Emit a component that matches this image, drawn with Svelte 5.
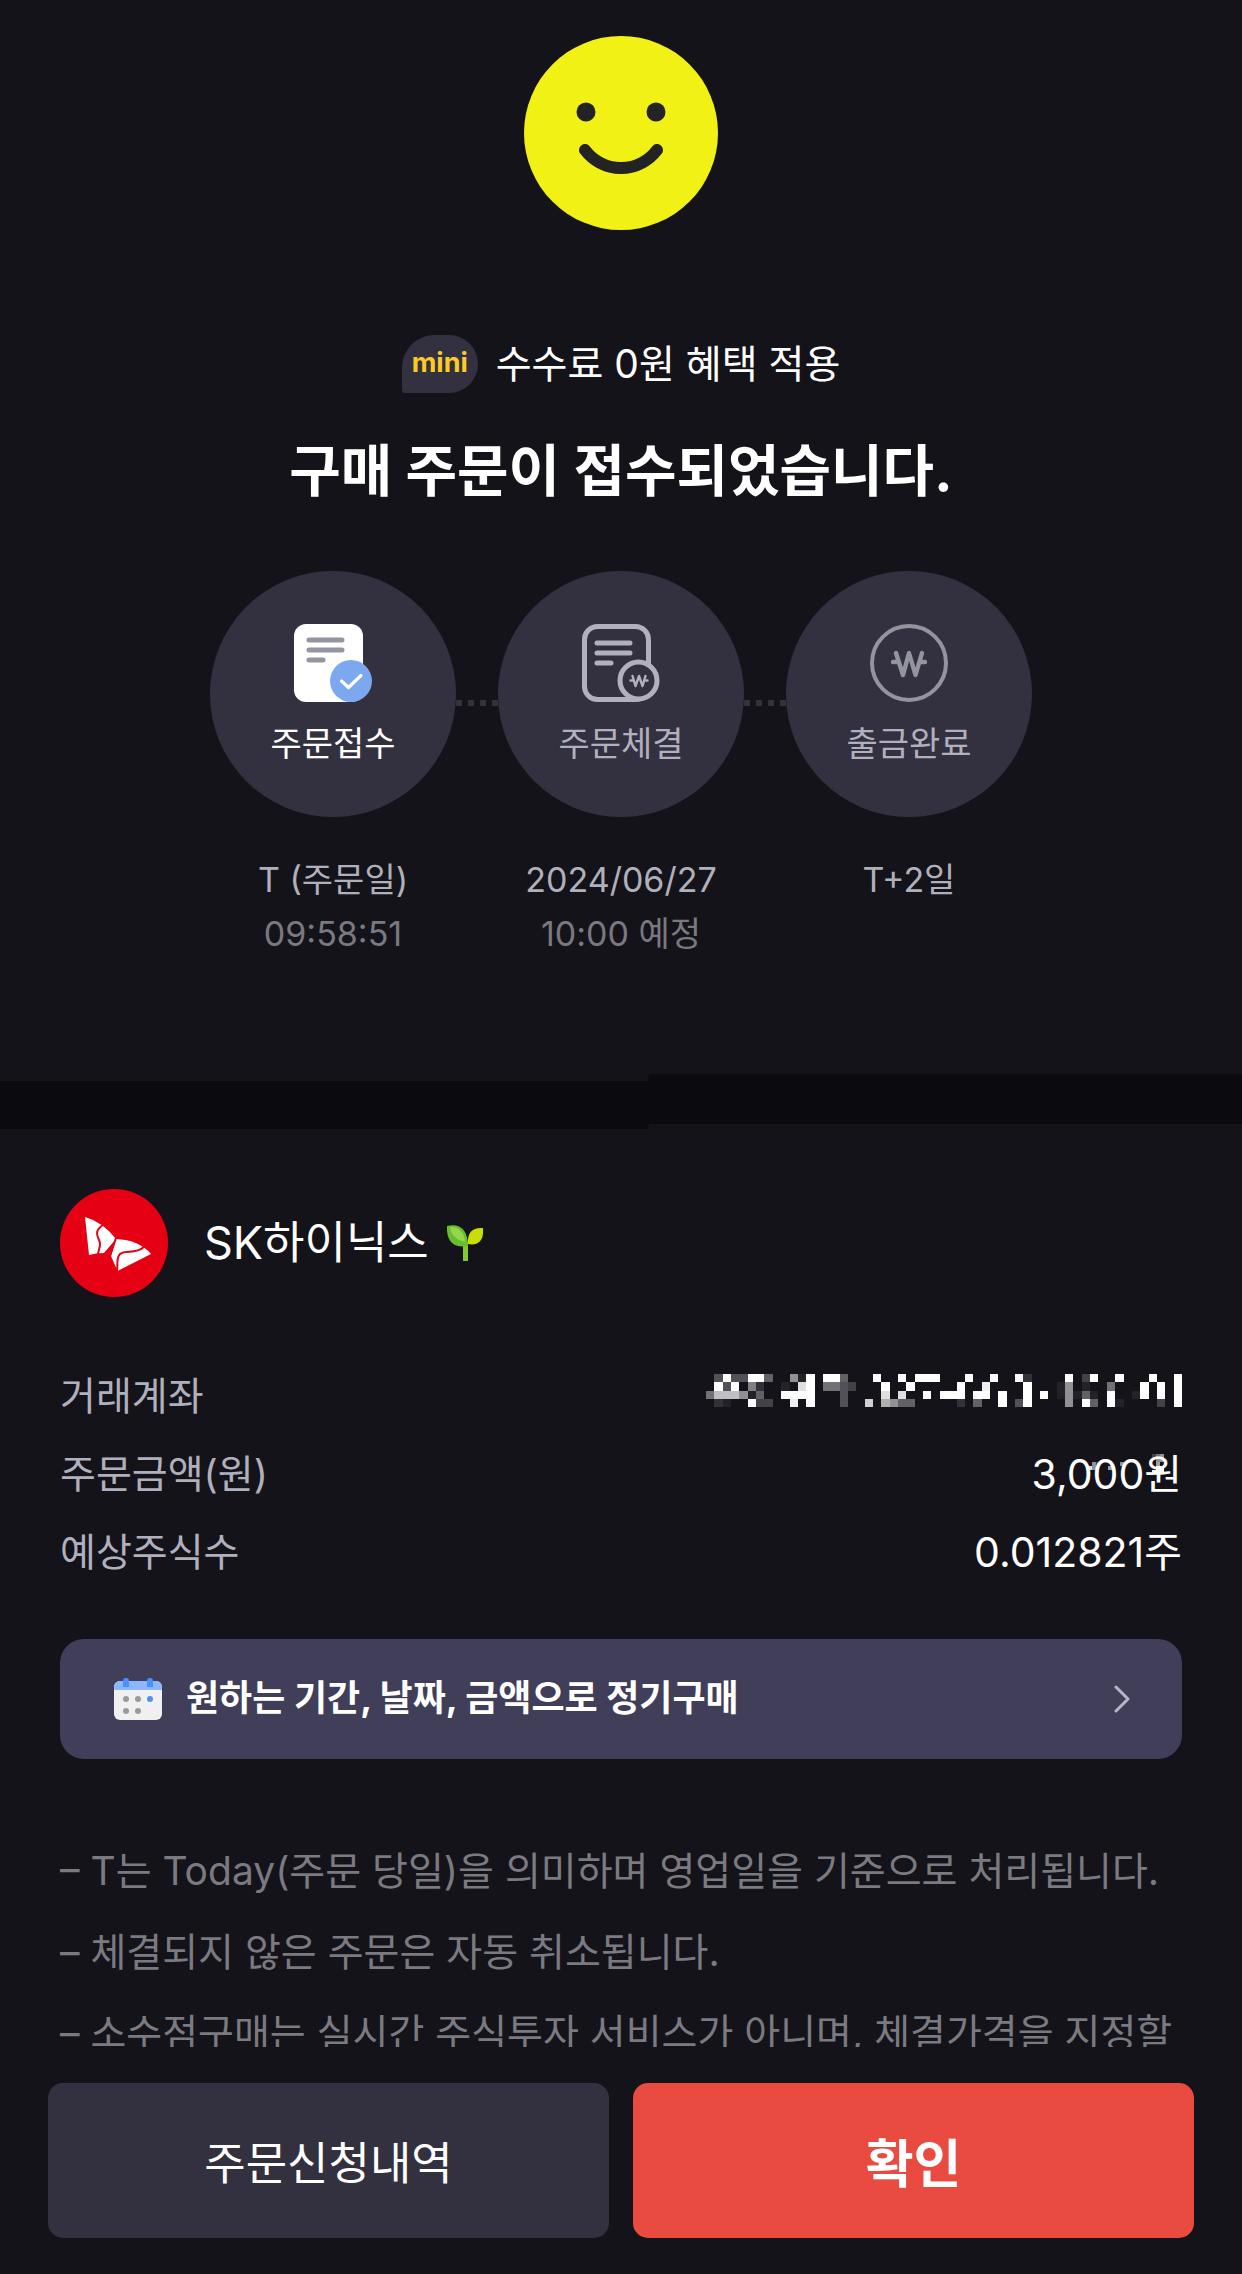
<script lang="ts">
  const steps = [
    { icon: 'received', label: '주문접수', day: 'T (주문일)', time: '09:58:51', active: true },
    { icon: 'filled', label: '주문체결', day: '2024/06/27', time: '10:00 예정', active: false },
    { icon: 'paid', label: '출금완료', day: 'T+2일', time: '', active: false },
  ];

  const notes = [
    'T는 Today(주문 당일)을 의미하며 영업일을 기준으로 처리됩니다.',
    '체결되지 않은 주문은 자동 취소됩니다.',
    '소수점구매는 실시간 주식투자 서비스가 아니며, 체결가격을 지정할',
  ];

  // Masked areas: one hex digit per cell, 0 is empty and f is white
  const accountMask = [
    '04f44ff50081f0ff5000f00f0fff000f00f00f20000f03f00f000f00f',
    '0f4f0720010df06643000f00f00000f00e0000f0001801006000f0f0f',
    '6bbb81500ffff00040000d0d00f0fff0ff0f00f0f0181510f001f0f0f',
    '02100f3300e0f000400c0a8550000020500f04f000080f50f1000030f',
  ];

  const amountMask = [
    '0000000000000000368000',
    '0000000000000000088000',
    '0830000080000000090000',
    'd8000900000000000ff000',
    '0000000000000000fff000',
  ];

  function cells(rows: string[]) {
    return rows.flatMap((row, y) =>
      [...row].flatMap((c, x) => {
        const level = parseInt(c, 16);
        return level ? [{ x, y, opacity: level / 15 }] : [];
      })
    );
  }
</script>

<div class="screen">
  <main>
    <section class="result">
      <svg class="smile" viewBox="0 0 194 194" aria-hidden="true">
        <circle cx="97" cy="97" r="97" fill="#f1f116" />
        <circle cx="62" cy="76" r="9.5" fill="#222322" />
        <circle cx="132" cy="76" r="9.5" fill="#222322" />
        <path d="M61 114A45 45 0 0 0 133 114" fill="none" stroke="#222322" stroke-width="12" stroke-linecap="round" />
      </svg>

      <p class="benefit"><span class="mini">mini</span>수수료 0원 혜택 적용</p>
      <h1>구매 주문이 접수되었습니다.</h1>

      <ol class="steps">
        {#each steps as step}
          <li>
            <div class="bubble" class:active={step.active}>
              <svg viewBox="0 0 78 78" fill="none" stroke-linecap="round" stroke-linejoin="round" aria-hidden="true">
                {#if step.icon === 'received'}
                  <rect width="69" height="78" rx="12" fill="#fff" />
                  <path d="M15 16H48M15 26H48M15 36H29" stroke="#9495a1" stroke-width="5" />
                  <circle cx="57" cy="57" r="21" fill="#7ba8ee" />
                  <path d="M47.5 57L54.5 63.5L67 51.5" stroke="#fff" stroke-width="3.2" />
                {:else if step.icon === 'filled'}
                  <rect x="2.5" y="2.5" width="64" height="73" rx="13" stroke="#b0b0bf" stroke-width="5" />
                  <path d="M15 19H48M15 29H48M15 39H29" stroke="#b0b0bf" stroke-width="5" />
                  <circle cx="56.5" cy="56.5" r="18.5" fill="#33313f" stroke="#b0b0bf" stroke-width="5" />
                  <path d="M50.5 52L53.5 62L57 52L60.5 62L63.5 52M48.5 56.5H51M63 56.5H65.5" stroke="#b0b0bf" stroke-width="2.4" />
                {:else}
                  <circle cx="39" cy="39" r="37" stroke="#94949f" stroke-width="4" />
                  <path d="M26 29L33 51L39 29L45.5 51L52 29M23 38H27M51 38H55" stroke="#94949f" stroke-width="4.4" />
                {/if}
              </svg>
              <span>{step.label}</span>
            </div>
            <p class="day">{step.day}</p>
            <p class="time">{step.time}</p>
          </li>
        {/each}
      </ol>
    </section>

    <div class="divider"></div>

    <section class="order">
      <h2>
        <svg class="logo" viewBox="0 0 108 108" aria-hidden="true">
          <circle cx="54" cy="54" r="54" fill="#e60013" />
          <path d="M25 28Q43 33 56 50L50 57L44 64Q36 64 29 66Z" fill="#fff" />
          <path d="M56 50Q79 51 91 65L57.5 82L51 67Z" fill="#fff" />
          <path d="M44 35C34 42 37 46 39 51C42 57 38 60 38 66M84 58C75 66 66 60 60 65C56 69 58 74 57 82M56 49L50 67" fill="none" stroke="#e60013" stroke-width="2" />
        </svg>
        SK하이닉스
        <svg class="sprout" viewBox="0 0 36 36" aria-hidden="true">
          <path d="M16 17H21V36H16Z" fill="#83c636" />
          <path d="M0 1C13-2 21 5 21 21C7 24-1 16 0 1Z" fill="#69bd2e" />
          <path d="M3 2C12 1 18 9 18 17C9 15 4 10 3 2Z" fill="#91d84b" />
          <path d="M36 3C37 15 32 21 21 19C20 8 25 2 36 3Z" fill="#c8de04" />
        </svg>
      </h2>

      <dl>
        <div class="row">
          <dt>거래계좌</dt>
          <dd>
            <svg class="account" viewBox="0 0 57 4" preserveAspectRatio="none" shape-rendering="crispEdges" role="img" aria-label="비공개">
              {#each cells(accountMask) as c}
                <rect x={c.x} y={c.y} width="1" height="1" fill="#fff" fill-opacity={c.opacity} />
              {/each}
            </svg>
          </dd>
        </div>
        <div class="row">
          <dt>주문금액(원)</dt>
          <dd>
            3,000원
            <svg class="noise" viewBox="0 0 22 7" shape-rendering="crispEdges" aria-hidden="true">
              {#each cells(amountMask) as c}
                <rect x={c.x} y={c.y} width="1" height="1" fill="#fff" fill-opacity={c.opacity} />
              {/each}
            </svg>
          </dd>
        </div>
        <div class="row">
          <dt>예상주식수</dt>
          <dd>0.012821주</dd>
        </div>
      </dl>

      <a class="banner" href="#recurring">
        <svg class="calendar" viewBox="0 0 48 42" aria-hidden="true">
          <rect y="3" width="48" height="39" rx="6" fill="#f0f0f0" />
          <path d="M0 12V9A6 6 0 0 1 6 3H42A6 6 0 0 1 48 9V12Z" fill="#8bb7ff" />
          <path d="M9 9V3A3 3 0 0 1 15 3V9ZM33 9V3A3 3 0 0 1 39 3V9Z" fill="#4f8ffb" />
          <g fill="#9a9a9a">
            <circle cx="12" cy="21" r="3" />
            <circle cx="24" cy="21" r="3" />
            <circle cx="12" cy="33" r="3" />
            <circle cx="24" cy="33" r="3" />
          </g>
          <circle cx="36" cy="21" r="3" fill="#4f8ffb" />
        </svg>
        <span>원하는 기간, 날짜, 금액으로 정기구매</span>
        <svg class="arrow" viewBox="0 0 16 28" aria-hidden="true">
          <path d="M2 2L14 14L2 26" fill="none" stroke="#b6b5c6" stroke-width="3" stroke-linecap="round" stroke-linejoin="round" />
        </svg>
      </a>

      <ul class="notes">
        {#each notes as note}
          <li>{note}</li>
        {/each}
      </ul>
    </section>
  </main>

  <footer>
    <button type="button">주문신청내역</button>
    <button type="button" class="primary">확인</button>
  </footer>
</div>

<style>
  :global(body) {
    margin: 0;
    background: #14131a;
  }
  .screen {
    display: flex;
    flex-direction: column;
    height: 100vh;
    background: #14131a;
    color: #fff;
    font-family: Inter, "Noto Sans CJK KR", sans-serif;
    font-size: 39px;
  }
  main {
    flex: 1;
    min-height: 0;
    overflow: hidden;
  }
  h1, h2, p, ol, ul, dl, dd {
    margin: 0;
    padding: 0;
  }
  ol, ul {
    list-style: none;
  }
  svg {
    display: block;
    flex-shrink: 0;
  }

  .result {
    display: flex;
    flex-direction: column;
    align-items: center;
    padding: 36px 60px 113px;
  }
  .smile {
    width: 194px;
    height: 194px;
  }
  .benefit {
    display: flex;
    align-items: center;
    gap: 18px;
    margin-top: 105px;
    line-height: 58px;
  }
  .mini {
    width: 76px;
    height: 58px;
    border-radius: 36px 32px 32px 4px;
    background: #33313f;
    color: #fccb24;
    font-size: 27px;
    font-weight: 700;
    line-height: 56px;
    text-align: center;
  }
  h1 {
    margin-top: 38px;
    font-size: 56px;
    font-weight: 700;
    line-height: 80px;
  }

  .steps {
    display: flex;
    gap: 42px;
    margin-top: 60px;
    text-align: center;
    font-size: 34px;
    line-height: 54px;
  }
  .steps li {
    position: relative;
    width: 246px;
  }
  /* dotted connector to the next step */
  .steps li:not(:last-child)::after {
    content: '';
    position: absolute;
    top: 129px;
    left: 100%;
    width: 42px;
    height: 6px;
    background: repeating-linear-gradient(90deg, #33323a 0 6px, transparent 6px 12px);
  }
  .bubble {
    box-sizing: border-box;
    display: flex;
    flex-direction: column;
    align-items: center;
    gap: 15px;
    height: 246px;
    margin-bottom: 36px;
    padding-top: 53px;
    border-radius: 50%;
    background: #33313f;
    color: #b0b0bf;
  }
  .bubble.active {
    color: #fff;
  }
  .bubble svg {
    width: 78px;
    height: 78px;
  }
  .day {
    color: #b0b0bb;
  }
  .time {
    color: #7a7980;
  }

  .divider {
    height: 55px;
    background: #0b0b0f;
    clip-path: polygon(0 7px, 52.2% 7px, 52.2% 0, 100% 0, 100% 50px, 52.2% 50px, 52.2% 100%, 0 100%);
  }

  .order {
    padding: 60px 60px 0;
  }
  h2 {
    display: flex;
    align-items: center;
    font-size: 45px;
    font-weight: 400;
    line-height: 108px;
  }
  .logo {
    width: 108px;
    height: 108px;
    margin-right: 36px;
  }
  .sprout {
    width: 36px;
    height: 36px;
    margin-left: 18px;
  }
  dl {
    margin-top: 60px;
    line-height: 78px;
  }
  .row {
    display: flex;
    justify-content: space-between;
  }
  dt {
    color: #b0b0bd;
  }
  dd {
    position: relative;
    font-size: 41px;
  }
  .account {
    width: 476px;
    height: 33px;
    margin-top: 17px;
  }
  .noise {
    position: absolute;
    right: 6px;
    top: 19px;
    width: 88px;
    height: 28px;
  }

  .banner {
    display: flex;
    align-items: center;
    gap: 24px;
    height: 120px;
    margin-top: 48px;
    padding: 0 52px 0 54px;
    border-radius: 24px;
    background: #403e58;
    color: #fff;
    font-size: 36px;
    font-weight: 700;
    line-height: 54px;
    text-decoration: none;
  }
  .banner span {
    flex: 1;
    padding-bottom: 2px;
  }
  .calendar {
    width: 48px;
    height: 42px;
  }
  .arrow {
    width: 16px;
    height: 28px;
  }

  .notes {
    margin-top: 71px;
    color: #7a7a80;
    line-height: 81px;
  }
  .notes li::before {
    content: '– ';
  }

  footer {
    display: flex;
    gap: 24px;
    padding: 36px 48px;
  }
  button {
    flex: 1;
    height: 155px;
    border: 0;
    border-radius: 15px;
    background: #33313f;
    color: #fff;
    font-family: inherit;
    font-size: 45px;
  }
  .primary {
    background: #e94b41;
    font-size: 52px;
    font-weight: 700;
  }
</style>
